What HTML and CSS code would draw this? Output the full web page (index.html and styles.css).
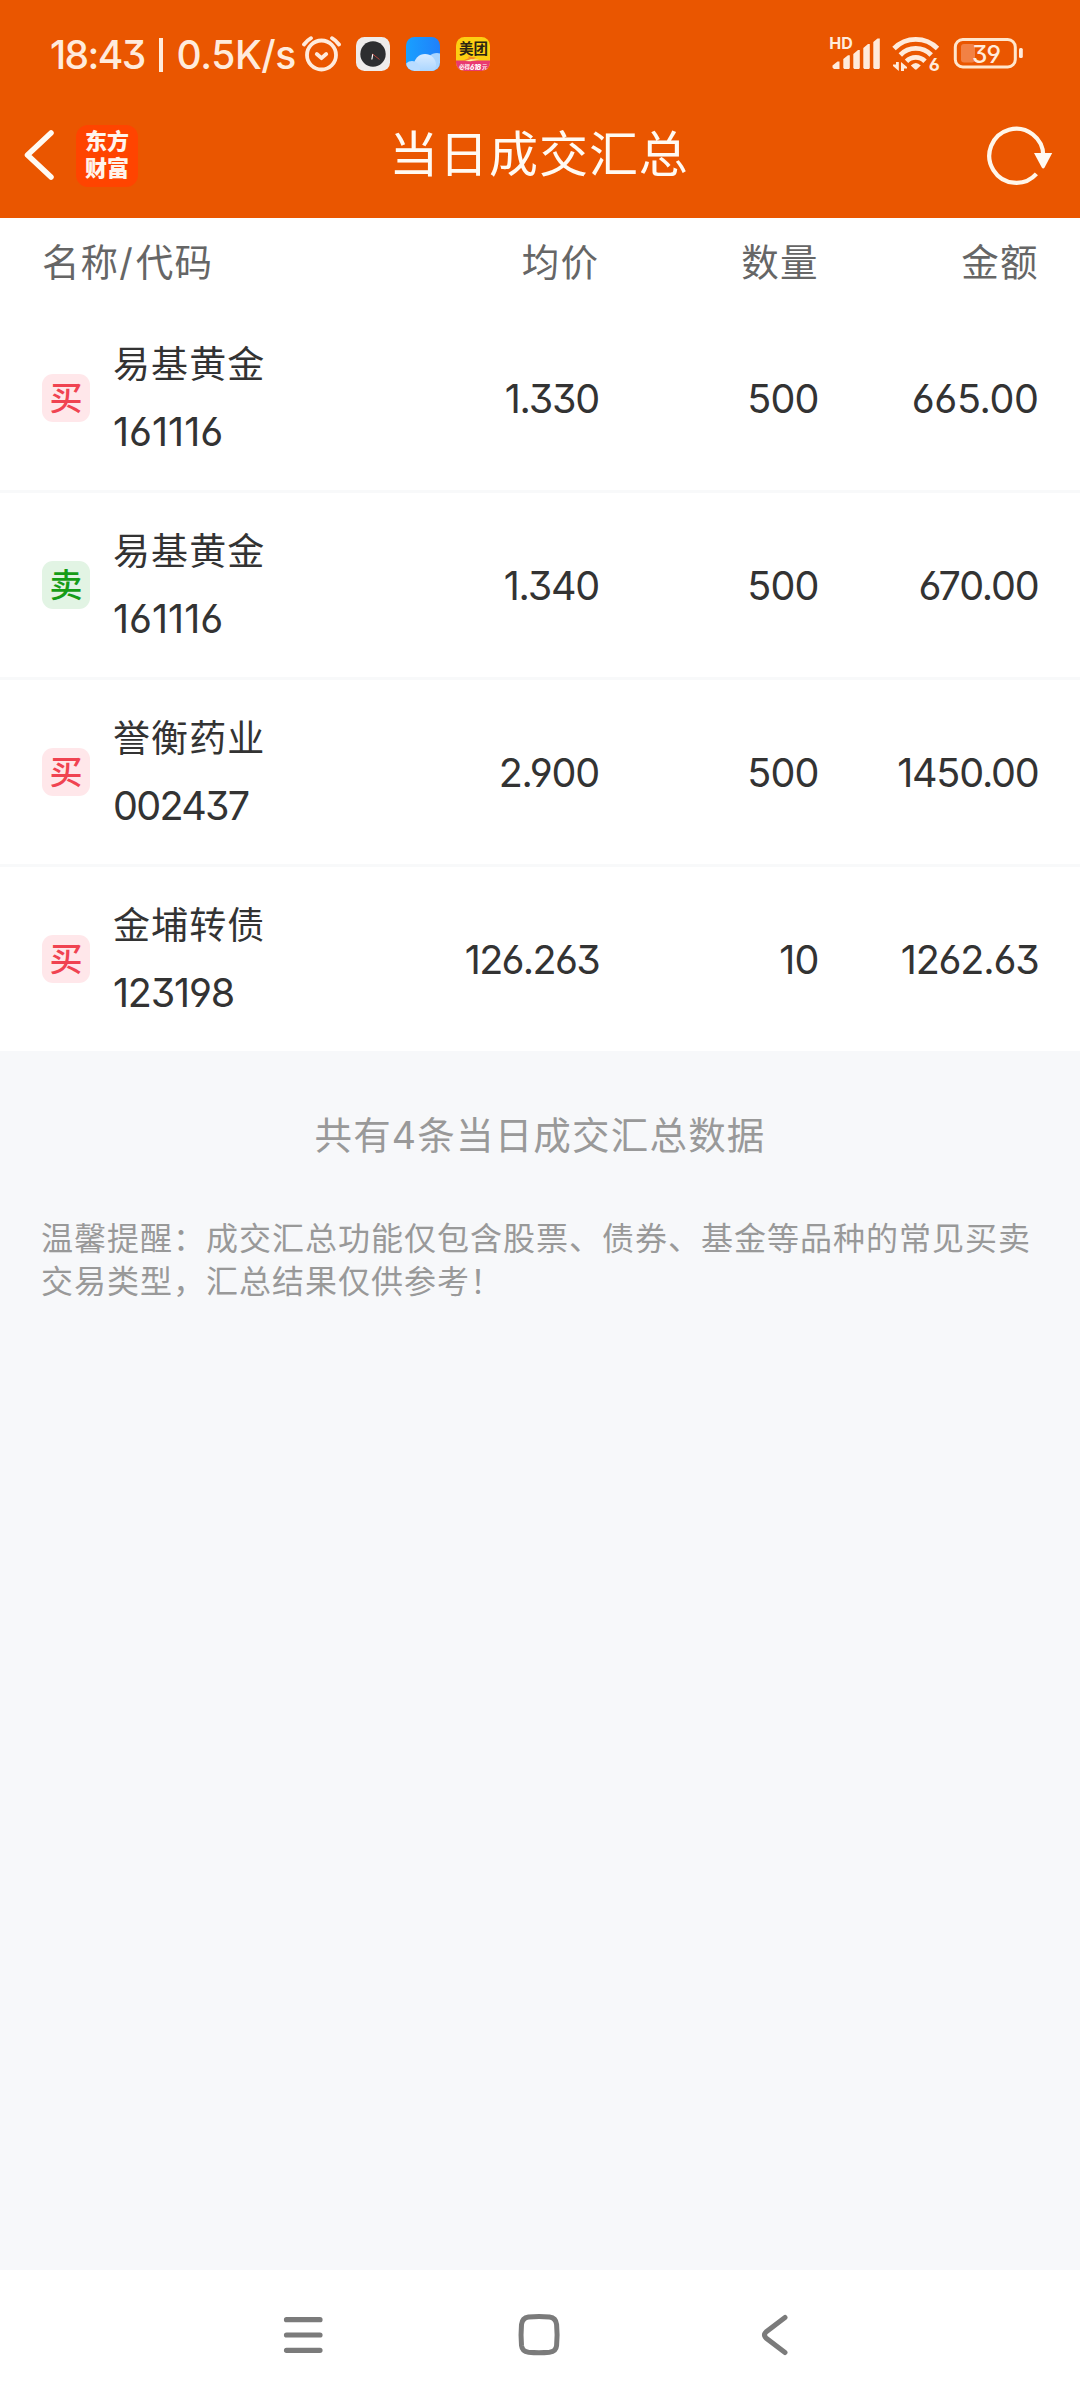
FILE: index.html
```html
<!DOCTYPE html>
<html lang="zh-CN">
<head>
<meta charset="utf-8">
<title>当日成交汇总</title>
<link rel="stylesheet" href="styles.css">
</head>
<body>
<div class="screen">
  <header class="top">
    <div class="status">
      <div class="status-text"><span class="clock">18:43</span><span class="bar"></span><span class="speed">0.5K/s</span></div>
      <svg class="alarm" width="40" height="40" viewBox="0 0 40 40" fill="none" stroke="#ffebdc" stroke-width="3.8" stroke-linecap="round">
        <circle cx="20.500" cy="21" r="14.5"/>
        <path d="M3 10.500Q6 6.500 10 4.200M38 10.500Q35 6.500 31 4.200"/>
        <path d="M15.800 20L20.500 24.200L25.200 20" stroke-linejoin="round"/>
      </svg>
      <svg class="app" width="34" height="34" viewBox="0 0 34 34">
        <rect width="34" height="34" rx="8.500" fill="#eeeceb"/>
        <circle cx="17" cy="17" r="12.700" fill="#2d2e30"/>
        <path d="M16.800 17L15.800 22.500" stroke="#fff" stroke-width="1.200"/>
        <path d="M16.500 17L23.500 22.500" stroke="#d8483f" stroke-width=".8"/>
      </svg>
      <svg class="app" width="34" height="34" viewBox="0 0 34 34">
        <defs>
          <linearGradient id="sky" x1="0" y1="0" x2="1" y2="0"><stop offset="0" stop-color="#18a0ff"/><stop offset="1" stop-color="#2080fa"/></linearGradient>
          <linearGradient id="cloud" x1="0" y1="0" x2="0" y2="1"><stop offset="0" stop-color="#d9ebff"/><stop offset="1" stop-color="#9ed0ff"/></linearGradient>
          <clipPath id="tile"><rect width="34" height="34" rx="8.500"/></clipPath>
        </defs>
        <g clip-path="url(#tile)">
          <rect width="34" height="34" fill="url(#sky)"/>
          <circle cx="31" cy="27" r="11" fill="#a9d5ff"/>
          <circle cx="19" cy="28" r="11" fill="url(#cloud)"/>
          <circle cx="6" cy="32" r="8" fill="#b9dcff"/>
        </g>
      </svg>
      <svg class="app" width="34" height="34" viewBox="0 0 34 34">
        <g clip-path="url(#tile)">
          <rect width="34" height="34" fill="#fdcf12"/>
          <path d="M0 23.500H34V34H0Z" fill="#e93a70"/>
          <path d="M7 23.500L13 21L12 19.500L20 20.500L17 22.500H24L14 24.500L16 22.800Z" fill="#f58a28"/>
          <path d="M9 24L15 22.300L24 22.500L14 24.300Z" fill="#fff1a0"/>
          <text class="mt-name" x="3" y="17">美团</text>
          <text class="mt-side" x="3" y="32">必得</text>
          <text class="mt-num" x="14" y="32.500">618</text>
          <text class="mt-side" x="26" y="32">元</text>
        </g>
      </svg>
      <svg class="signals" width="200" height="50" viewBox="826 30 200 50" fill="#ffebdc">
        <text class="hd" x="829.300" y="50">HD</text>
        <path d="M832.500 68.500V66.500L837.500 62.500H839.500V70H834ZM843.300 69V60L848 56.200H849.800V69L849 70H844.300ZM853.300 69V55L858 51H859.800V69L859 70H854.300ZM863.300 69V49L868 45H869.800V69L869 70H864.300ZM873.300 69V43L877.500 39.500H879.800V69L879 70H874.300Z"/>
        <g fill="none" stroke="#ffebdc" stroke-width="4.800">
          <path d="M894 49.500A30.500 30.500 0 0 1 937.500 49.500"/>
          <path d="M900.300 56A21.500 21.500 0 0 1 931.200 56"/>
          <path d="M906.500 62.200A13 13 0 0 1 925 62.200"/>
        </g>
        <path d="M910.800 66.500Q915.800 61.500 920.800 66.500L916.800 70.300Q915.800 71 914.800 70.300Z"/>
        <path d="M896 63H898.800V72L893 67V65.500H896ZM901 72V63L907 68V69.500H904V72Z"/>
        <text class="six" x="928.800" y="72">6</text>
        <rect x="955.300" y="40.500" width="60" height="27.500" rx="7.500" fill="none" stroke="#ffe6cd" stroke-width="3"/>
        <rect x="961" y="45" width="14" height="18.500" rx="3" fill="#f28144"/>
        <text class="level" x="972" y="63.500">39</text>
        <rect x="1019" y="49" width="3.800" height="10" rx="1.500"/>
      </svg>
    </div>
    <div class="nav">
      <div class="nav-left">
        <svg width="34" height="60" viewBox="22 127 34 60" fill="none" stroke="#fffaf3" stroke-width="5.500" stroke-linecap="round" stroke-linejoin="round"><path d="M51 134L27.500 156L51 178"/></svg>
        <div class="logo">东方<br>财富</div>
      </div>
      <h1 class="title">当日成交汇总</h1>
      <svg class="refresh" width="70" height="64" viewBox="984 124 70 64">
        <path d="M1036.400 173.800A27 27 0 1 1 1043.300 156" fill="none" stroke="#fff6ea" stroke-width="4.200"/>
        <path d="M1034 153H1052.200L1044.600 167.500Q1043.200 169.500 1041.800 167.500Z" fill="#fffaf3"/>
      </svg>
    </div>
  </header>
  <main>
    <div class="grid head"><span>名称<span class="slash">/</span>代码</span><span class="r">均价</span><span class="r">数量</span><span class="r">金额</span></div>
    <div class="grid row">
      <div class="stock"><span class="badge buy">买</span><div class="id"><span class="name">易基黄金</span><span class="code">161116</span></div></div>
      <span class="num tight">1.330</span><span class="num qty">500</span><span class="num">665.00</span>
    </div>
    <div class="grid row">
      <div class="stock"><span class="badge sell">卖</span><div class="id"><span class="name">易基黄金</span><span class="code">161116</span></div></div>
      <span class="num tight">1.340</span><span class="num qty">500</span><span class="num tight">670.00</span>
    </div>
    <div class="grid row">
      <div class="stock"><span class="badge buy">买</span><div class="id"><span class="name">誉衡药业</span><span class="code tighter">002437</span></div></div>
      <span class="num tight">2.900</span><span class="num qty">500</span><span class="num tight">1450.00</span>
    </div>
    <div class="grid row">
      <div class="stock"><span class="badge buy">买</span><div class="id"><span class="name">金埔转债</span><span class="code tight">123198</span></div></div>
      <span class="num tighter">126.263</span><span class="num qty">10</span><span class="num tight">1262.63</span>
    </div>
  </main>
  <section class="foot">
    <p class="count">共有4条当日成交汇总数据</p>
    <p class="note">温馨提醒：成交汇总功能仅包含股票、债券、基金等品种的常见买卖<br>交易类型，汇总结果仅供参考！</p>
  </section>
  <nav class="sysbar">
    <svg width="52" height="52" viewBox="277 2309 52 52"><path d="M286.500 2319.700H320M286.500 2335H320M286.500 2350.300H320" stroke="#7b7b7b" stroke-width="5.200" stroke-linecap="round"/></svg>
    <svg width="52" height="52" viewBox="514 2309 52 52"><path d="M528.500 2317Q539 2316 549.500 2317Q556 2318 556.600 2324.500Q557.600 2335 556.600 2345.500Q556 2351.500 549.500 2352.300Q539 2353.300 528.500 2352.300Q522.200 2351.500 521.500 2345.500Q520.600 2335 521.500 2324.500Q522.200 2318 528.500 2317Z" fill="none" stroke="#7b7b7b" stroke-width="5"/></svg>
    <svg width="52" height="52" viewBox="751 2309 52 52"><path d="M785 2317.500L766 2332Q763 2335 766 2338L785 2352.500" fill="none" stroke="#7b7b7b" stroke-width="5" stroke-linecap="round"/></svg>
  </nav>
</div>
</body>
</html>
```
FILE: styles.css
```css
* { box-sizing: border-box; }
body { margin: 0; font-family: "Inter", "Noto Sans CJK SC", sans-serif; font-weight: 400; font-feature-settings: "cv03", "cv04", "cv09"; }
.screen { width: 1080px; height: 2400px; display: flex; flex-direction: column; background: #f7f8fa; }
.top { height: 218px; background: #ea5600; }
.status { height: 94px; padding: 14px 0 0 50px; display: flex; align-items: center; }
.status-text { width: 251px; padding-top: 1px; display: flex; align-items: center; font-size: 39px; font-weight: 500; line-height: 80px; color: #ffebdc; white-space: nowrap; }
.clock { width: 109px; letter-spacing: -1.600px; }
.bar { width: 3.500px; height: 34px; background: #ffebdc; }
.speed { margin-left: 14px; letter-spacing: -0.4px; }
.alarm { margin-right: 15px; }
.app { margin-right: 16px; }
.signals { margin-left: 320px; }
.hd { font-size: 16px; font-weight: 700; }
.six { font-size: 18px; font-weight: 700; }
.level { font-size: 24.500px; font-weight: 500; letter-spacing: -1px; }
.mt-name { font-family: "Noto Sans CJK SC", sans-serif; font-size: 14.500px; font-weight: 700; fill: #2b2413; }
.mt-side { font-family: "Noto Sans CJK SC", sans-serif; font-size: 5.500px; font-weight: 700; fill: #fff; }
.mt-num { font-size: 7px; font-style: italic; font-weight: 800; letter-spacing: -0.5px; fill: #fff; }
.nav { height: 124px; padding: 0 26px 0 22px; display: grid; grid-template-columns: 200px 1fr 200px; align-items: center; }
.nav-left { display: flex; align-items: center; gap: 20px; }
.logo { width: 62px; height: 62px; border-radius: 12px; background: #ff4400; color: #fff4ec; padding-top: 1px; text-align: center; font-family: "Noto Sans CJK SC", sans-serif; font-size: 22px; line-height: 27px; font-weight: 900; }
.title { margin: 0; padding: 0 0 2px 2px; text-align: center; font-size: 49px; line-height: 70px; font-weight: 400; letter-spacing: 0.9px; color: #fffaf3; }
.refresh { justify-self: end; }
.grid { display: grid; grid-template-columns: 357px 200px 219.500px 220px; padding-left: 42px; align-items: center; background: #fff; }
.head { height: 88px; padding-bottom: 5px; font-size: 37.500px; letter-spacing: 1.1px; color: #666; }
.slash { margin-right: 2px; }
.r { text-align: right; }
.row { height: 187px; border-bottom: 3px solid #f8f9fa; color: #333; }
.row:last-child { height: 184px; border-bottom: 0; }
.stock { display: flex; align-items: center; }
.badge { width: 48px; height: 48px; border-radius: 11px; display: flex; align-items: center; justify-content: center; font-size: 33px; line-height: 48px; font-weight: 500; }
.buy { background: #ffe7ea; color: #f04351; }
.sell { background: #e2f4e4; color: #169c16; }
.id { margin-left: 23px; display: flex; flex-direction: column; }
.name { padding-top: 2px; font-size: 37px; line-height: 66px; letter-spacing: 1.100px; }
.code { font-size: 39.500px; line-height: 68px; }
.num { padding-top: 1px; text-align: right; font-size: 39.500px; letter-spacing: -0.4px; }
.qty { letter-spacing: -0.9px; }
.tight { letter-spacing: -1.200px; }
.tighter { letter-spacing: -1.700px; }
.foot { flex: 1; }
.count { margin: 55px 0 0; line-height: 60px; text-align: center; font-size: 37.500px; letter-spacing: 1.2px; color: #999; }
.note { margin: 51px 0 0 41px; font-size: 32px; line-height: 43px; letter-spacing: 1px; color: #999; white-space: nowrap; }
.sysbar { height: 130px; padding: 0 277px; background: #fff; display: flex; align-items: center; justify-content: space-between; }
```
